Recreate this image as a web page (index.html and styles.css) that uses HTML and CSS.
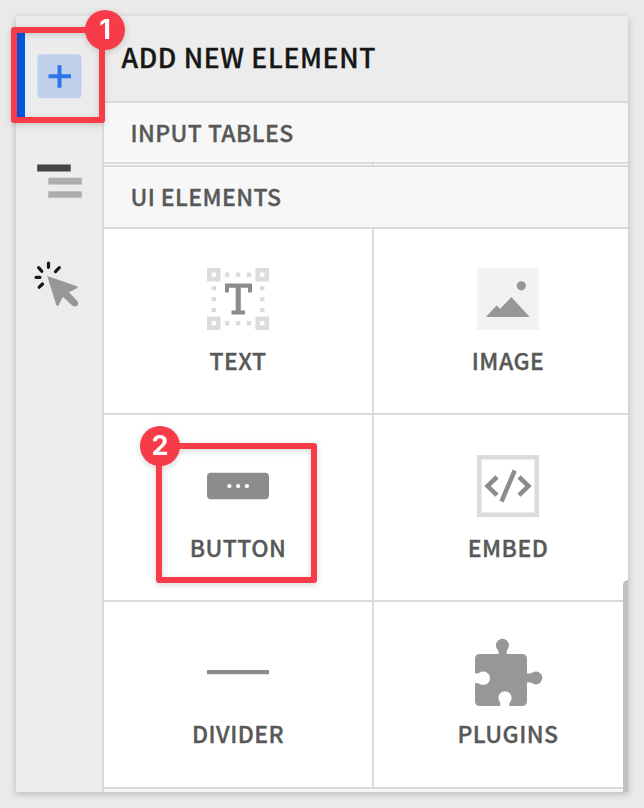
FILE: index.html
```html
<!DOCTYPE html>
<html lang="en">
<head>
<meta charset="utf-8">
<title>Add new element</title>
<link rel="stylesheet" href="styles.css">
</head>
<body>
<main class="panel">
  <nav class="rail">
    <div class="rail-item active">
      <svg width="45" height="45" viewBox="-.5 -.3 45 45"><rect width="44" height="44" rx="4" fill="#c0cfeb"/><path d="M22 11v22.500M11 22h22.500" stroke="#2f74e8" stroke-width="4"/></svg>
    </div>
    <div class="rail-item">
      <svg width="46" height="36" viewBox="0 0 46 36"><path d="M.2 4h33.500" stroke="#444" stroke-width="7.200"/><path d="M11.300 17.200h33.500M11.300 30.500h33.500" stroke="#adadad" stroke-width="6.700"/></svg>
    </div>
    <div class="rail-item">
      <svg width="46" height="46" viewBox="0 0 46 46"><path d="M14.500 2v4.300M4.600 6.600l3.200 3.600M25.300 6.600l-3.800 4M2 16.300h4M8.500 23l-3.300 3.200" stroke="#161616" stroke-width="3.200" stroke-linecap="round"/><path d="M13.200 15 43 25.300Q44.500 26.300 43 27.300L35 31.200 43.500 40.300Q44.800 42 44 43.700 41.500 47 38.200 44.400L29 35.700 24.600 44.300Q23.500 45.600 22.400 44.200Z" fill="#979797"/></svg>
    </div>
  </nav>
  <section class="content">
    <h1 class="title">ADD NEW ELEMENT</h1>
    <h2 class="group">INPUT TABLES</h2>
    <div class="seam"></div>
    <h2 class="group ui">UI ELEMENTS</h2>
    <div class="grid">
      <div class="cell">
        <svg width="62" height="62" viewBox="0 0 62 62"><g fill="none" stroke="#dcdcdc" stroke-width="4.500"><path d="M2.250 2.250h9v9h-9zM50.750 2.250h9v9h-9zM2.250 50.750h9v9h-9zM50.750 50.750h9v9h-9z"/><path d="M18 6.800h4.300M28.900 6.800h4.300M39.900 6.800h4.300M18 55.200h4.300M28.900 55.200h4.300M39.900 55.200h4.300M6.800 17.900v4.300M6.800 29v4.300M6.800 40v4.300M55.200 17.900v4.300M55.200 29v4.300M55.200 40v4.300"/></g><path d="M18 15.500h27v9h-4v-4.800h-7.200v22.800h4.200v4h-13.500v-4h4.200v-22.800h-6.700v4.800h-4z" fill="#8c8c8c"/></svg>
        <span>TEXT</span>
      </div>
      <div class="cell">
        <svg width="62" height="62" viewBox="0 0 62 62"><path d="M0 0h62v62H0z" fill="#f2f2f2"/><circle cx="44.300" cy="17.800" r="4.600" fill="#979797"/><path d="M9 49 19.500 37.500 23.200 40.700 34.400 29 52.700 49z" fill="#979797"/></svg>
        <span>IMAGE</span>
      </div>
      <div class="cell middle">
        <svg width="62" height="62" viewBox="0 0 62 62"><rect y="17.800" width="62" height="26.500" rx="4" fill="#8c8c8c"/><g fill="#fff"><circle cx="22.400" cy="31.100" r="2.150"/><circle cx="31.100" cy="31.100" r="2.150"/><circle cx="39.900" cy="31.100" r="2.150"/></g></svg>
        <span>BUTTON</span>
      </div>
      <div class="cell middle">
        <svg width="62" height="62" viewBox="0 0 62 62"><path d="M2.300 2.300h57.400v57.400H2.300z" fill="none" stroke="#dcdcdc" stroke-width="4.600"/><path d="M20 22 10.500 31 20 40.200M42 22 51.500 31 42 40.200M37.700 15.500 24.500 46.500" fill="none" stroke="#8c8c8c" stroke-width="4.500"/></svg>
        <span>EMBED</span>
      </div>
      <div class="cell">
        <svg width="62" height="62" viewBox="0 0 62 62"><path d="M0 31.100h62" stroke="#8c8c8c" stroke-width="4.400"/></svg>
        <span>DIVIDER</span>
      </div>
      <div class="cell">
        <svg class="wide" width="70" height="70" viewBox="0 0 70 70"><path d="M5 17H23.500Q24 15 22.900 13A6.500 6.500 0 1 1 32 13Q31.300 15 31.800 17H47Q52 17 52 22V36.600Q54 37 56.500 36A6.500 6.500 0 1 1 56.500 45.800Q54 44.800 52 45.400V64Q52 69 47 69H34.500Q33.800 67 35.200 65A6.600 6.600 0 1 0 24.800 65Q25.800 67 25 69H5Q0 69 0 64V46.200Q2 45.600 4.500 46.700A6.700 6.700 0 1 0 4.500 35.700Q2 37 0 36.300V22Q0 17 5 17Z" fill="#979797"/></svg>
        <span>PLUGINS</span>
      </div>
    </div>
    <div class="scrollbar"></div>
  </section>
</main>
<div class="callout first"><span class="badge">1</span></div>
<div class="callout second"><span class="badge">2</span></div>
</body>
</html>
```

FILE: styles.css
```css
* { box-sizing: border-box; }
body {
  margin: 0;
  padding: 16px;
  width: 644px;
  height: 808px;
  overflow: hidden;
  background: #eaeaea;
  font-family: "Noto Sans CJK SC", "Open Sans", sans-serif;
  font-weight: 500;
  color: #585858;
  -webkit-text-stroke: .35px;
}
svg { display: block; flex: none; }
.panel {
  display: flex;
  width: 612px;
  height: 776px;
  background: #ececec;
  box-shadow: 0 2px 7px rgba(0, 0, 0, .22);
}
.rail {
  flex: none;
  width: 88px;
  padding-top: 16px;
  border-right: 2px solid #dadada;
}
.rail-item { height: 104px; padding: 29px 0 0 21px; }
.rail-item:last-child { padding: 22px 0 0 18px; }
.active {
  height: 90px;
  margin-bottom: 13px;
  padding: 22px 0 0 12px;
  border-left: 9px solid #0457e0;
}
.content {
  position: relative;
  flex: 1;
  min-width: 0;
  overflow: hidden;
}
.title {
  margin: 0;
  height: 87px;
  padding-left: 17.5px;
  border-bottom: 2px solid #dadada;
  color: #161616;
  font-size: 26.5px;
  font-weight: 500;
  letter-spacing: .67px;
  line-height: 81px;
}
.group {
  margin: 0;
  height: 61px;
  padding-left: 26.5px;
  border-bottom: 2px solid #dadada;
  background: #f7f7f7;
  font-size: 23px;
  font-weight: 500;
  letter-spacing: .4px;
  line-height: 58px;
}
.seam {
  width: 538px;
  height: 1px;
  background: linear-gradient(90deg, #fff 268px, #dadada 268px, #dadada 270px, #fff 270px);
}
.ui { height: 64px; border-top: 2px solid #dadada; }
.grid {
  display: grid;
  grid-template-columns: 270px 268px;
  grid-template-rows: 186px 187px 187px;
  width: 538px;
  background: #fff;
  box-shadow: 0 3px #f7f7f7;
}
.cell {
  display: flex;
  flex-direction: column;
  align-items: center;
  padding-top: 39px;
  border-bottom: 2px solid #dadada;
  font-size: 23px;
  letter-spacing: .45px;
}
.middle { padding-top: 40px; }
.cell:nth-child(odd) { border-right: 2px solid #dadada; }
.cell span { margin-top: 12px; line-height: 36px; }
.cell .wide { margin: -4px 0 -4px 4px; }
.scrollbar {
  position: absolute;
  right: 0;
  bottom: 0;
  width: 5px;
  height: 212px;
  border-radius: 5px 0 0 0;
  background: #c1c1c1;
}
.callout {
  position: absolute;
  border: 6px solid #f73b49;
  border-radius: 3px;
  filter: drop-shadow(0 2px 3px rgba(0, 0, 0, .16));
}
.first { left: 11px; top: 27px; width: 94px; height: 96px; }
.second { left: 156px; top: 443px; width: 161px; height: 140px; }
.badge {
  position: absolute;
  width: 40px;
  height: 40px;
  border-radius: 50%;
  background: #f73b49;
  color: #fff;
  font: 700 27px/40px Inter, sans-serif;
  text-align: center;
  -webkit-text-stroke: 0;
}
.first .badge { left: 68px; top: -23px; }
.second .badge { left: -22px; top: -23px; }
```
